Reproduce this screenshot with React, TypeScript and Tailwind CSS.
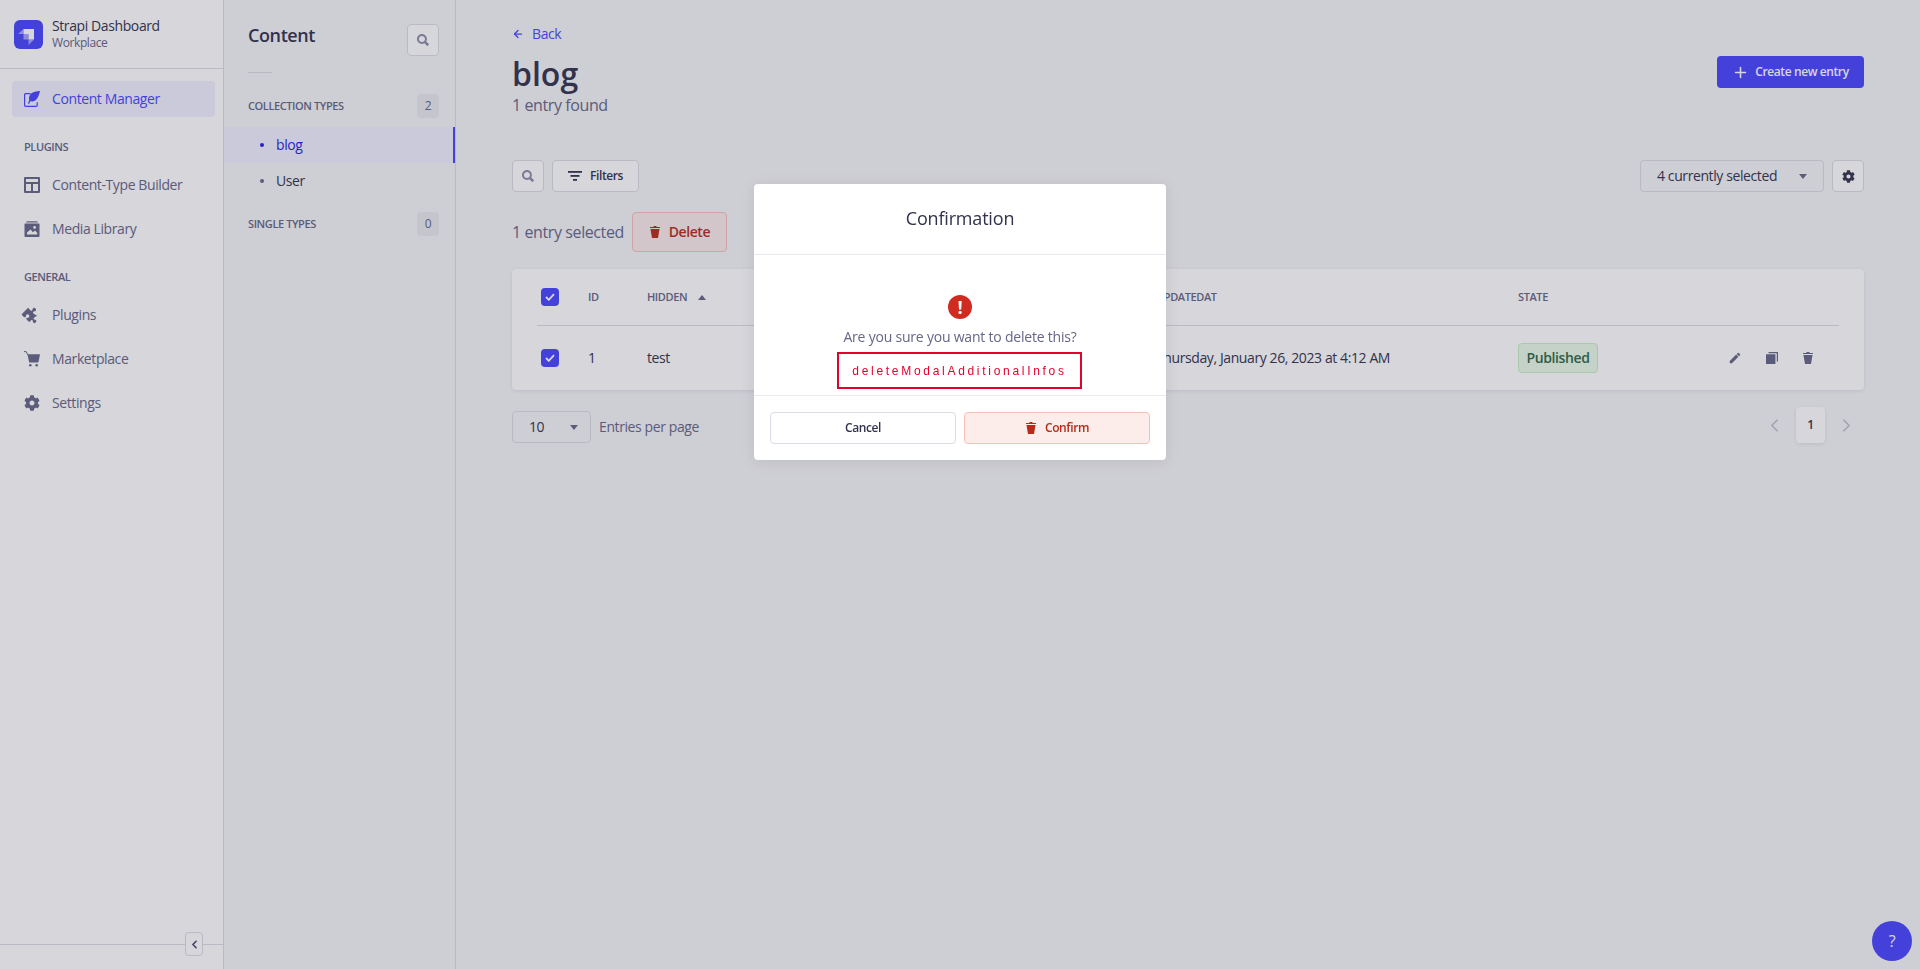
import React from 'react';
import { ArrowLeft, ChevronLeft, ChevronRight, Plus } from 'lucide-react';
import { FaCog, FaPuzzlePiece } from 'react-icons/fa';
import { MdEdit } from 'react-icons/md';

const font = { fontFamily: '"Open Sans", sans-serif' };

const TrashIcon = ({ className }: { className?: string }) => (
  <svg viewBox="0 0 24 24" className={className} fill="currentColor">
    <path d="M3.236 6.149a.2.2 0 00-.197.233L6 24h12l2.96-17.618a.2.2 0 00-.196-.233H3.236zM21.8 1.983c.11 0 .2.09.2.2v1.584a.2.2 0 01-.2.2H2.2a.2.2 0 01-.2-.2V2.183c0-.11.09-.2.2-.2h5.511c.9 0 1.631-1.09 1.631-1.983h5.316c0 .894.73 1.983 1.631 1.983H21.8z" />
  </svg>
);

const SearchIcon = ({ className }: { className?: string }) => (
  <svg viewBox="0 0 24 24" className={className} fill="currentColor">
    <path fillRule="evenodd" clipRule="evenodd" d="M23.813 20.163l-5.3-5.367a9.792 9.792 0 001.312-4.867C19.825 4.455 15.375 0 9.913 0 4.45 0 0 4.455 0 9.929c0 5.473 4.45 9.928 9.912 9.928a9.757 9.757 0 005.007-1.4l5.275 5.35a.634.634 0 00.913 0l2.706-2.737a.641.641 0 000-.907zM9.91 3.867c3.338 0 6.05 2.718 6.05 6.061s-2.712 6.061-6.05 6.061c-3.337 0-6.05-2.718-6.05-6.06 0-3.344 2.713-6.062 6.05-6.062z" />
  </svg>
);

const FilterIcon = () => (
  <svg viewBox="0 0 14 10" className="w-[14px] h-[10px]" fill="#32324d">
    <rect x="0" y="0" width="14" height="1.8" />
    <rect x="2.5" y="4" width="9" height="1.8" />
    <rect x="5" y="8" width="4" height="1.8" />
  </svg>
);

const Caret = ({ up }: { up?: boolean }) => (
  <svg viewBox="0 0 8 5" className="w-[8px] h-[5px]" fill="#666687">
    <path d={up ? 'M4 0l4 5H0z' : 'M0 0h8L4 5z'} />
  </svg>
);

const Logo = () => (
  <div className="w-[29px] h-[29px] rounded-md bg-[#4945ff] pl-1 pt-[9px]">
    <svg viewBox="0 0 16 16" className="w-[16px] h-[16px]" fill="#fff">
      <path d="M5.5 0H16v10.5H10.5V5H5.5z" />
      <path d="M5.5 0v5H0z" opacity="0.5" />
      <path d="M5.5 5h5v5.5H5.5z" opacity="0.5" />
      <path d="M10.5 10.5H16L10.5 16z" opacity="0.5" />
    </svg>
  </div>
);

const FeatherIcon = () => (
  <svg viewBox="0 0 16 16" className="w-[16px] h-[16px]" fill="none">
    <path d="M6.5 2.7H1.6a1 1 0 00-1 1v10.6a1 1 0 001 1h10.6a1 1 0 001-1v-3" stroke="#4945ff" strokeWidth="1.2" />
    <path d="M16 0c-3 .2-7.6.9-9.6 3.3C4.9 5.1 4.8 7.5 5.2 9.2L3.9 12.7h1.3l1.2-2.4c1.7.4 3.8.1 5.4-1.3C14.2 6.9 15.2 3.2 16 0z" fill="#4945ff" />
  </svg>
);

const LayoutIcon = () => (
  <svg viewBox="0 0 16 16" className="w-[16px] h-[16px]">
    <path fill="#666687" fillRule="evenodd" d="M1 0h14a1 1 0 011 1v14a1 1 0 01-1 1H1a1 1 0 01-1-1V1a1 1 0 011-1zm1 2v3h12V2H2zm0 5v7h5V7H2zm7 0v7h5V7H9z" />
  </svg>
);

const MediaIcon = () => (
  <svg viewBox="0 0 16 16" className="w-[16px] h-[16px]">
    <rect x="2.5" y="0.3" width="11" height="1.2" fill="#666687" />
    <path fill="#666687" fillRule="evenodd" d="M1.2 2.6h13.6a.7.7 0 01.7.7v11.9a.7.7 0 01-.7.7H1.2a.7.7 0 01-.7-.7V3.3a.7.7 0 01.7-.7zM10.6 5a1.4 1.4 0 100 2.8 1.4 1.4 0 000-2.8zM3 13.6h10.2v-1.9l-2.3-2.3-2 1.8-2.3-2.7L3 11.6z" />
  </svg>
);

const CartIcon = () => (
  <svg viewBox="0 0 16 16" className="w-[16px] h-[16px]" fill="#666687">
    <path d="M0 .6h2.2l1.5 3.2" fill="none" stroke="#666687" strokeWidth="1" />
    <path d="M3.4 3.2H16l-1.3 6.8-.6 1.4H5.2l-.3-1.4z" />
    <circle cx="6.3" cy="14.3" r="1.3" />
    <circle cx="12.7" cy="14.3" r="1.3" />
  </svg>
);

const DuplicateIcon = () => (
  <svg viewBox="0 0 14 14" className="w-[12px] h-[12px]" fill="#666687">
    <rect x="0" y="2.6" width="11" height="11.4" rx="0.6" />
    <path d="M3 0h11v11h-1.4V1.4H3z" />
  </svg>
);

const CheckBox = () => (
  <div className="w-[18px] h-[18px] rounded-[4px] bg-[#4945ff] flex items-center justify-center">
    <svg viewBox="0 0 10 8" className="w-[10px] h-[8px]" fill="none">
      <path d="M1 4l2.8 2.8L9 1.2" stroke="#fff" strokeWidth="1.8" />
    </svg>
  </div>
);

const NavItem = ({ icon, label, active }: { icon: React.ReactNode; label: string; active?: boolean }) => (
  <div className={`h-[36px] ml-3 mr-2 px-3 rounded flex items-center gap-3 text-sm ${active ? 'bg-[#f0f0ff] text-[#4945ff] font-medium' : 'text-[#666687]'}`}>
    <span className="w-4 h-4 flex items-center justify-center shrink-0">{icon}</span>
    {label}
  </div>
);

const NavLabel = ({ children }: { children: string }) => (
  <div className="mt-[22px] mb-3 px-6 h-4 flex items-center text-[11px] font-semibold uppercase text-[#666687]">{children}</div>
);

const SideNav = () => (
  <nav className="relative w-[224px] shrink-0 h-full bg-white border-r border-[#dcdce4] flex flex-col">
    <div className="h-[69px] shrink-0 border-b border-[#dcdce4] pl-[14px] flex items-center gap-[9px]">
      <Logo />
      <div className="flex flex-col">
        <span className="text-sm leading-[18px] font-medium text-[#32324d]">Strapi Dashboard</span>
        <span className="text-xs leading-[16px] text-[#666687]">Workplace</span>
      </div>
    </div>
    <div className="pt-3 flex flex-col">
      <NavItem active label="Content Manager" icon={<FeatherIcon />} />
      <NavLabel>Plugins</NavLabel>
      <div className="flex flex-col gap-2">
        <NavItem label="Content-Type Builder" icon={<LayoutIcon />} />
        <NavItem label="Media Library" icon={<MediaIcon />} />
      </div>
      <NavLabel>General</NavLabel>
      <div className="flex flex-col gap-2">
        <NavItem label="Plugins" icon={<FaPuzzlePiece size={16} color="#666687" className="rotate-45 shrink-0" />} />
        <NavItem label="Marketplace" icon={<CartIcon />} />
        <NavItem label="Settings" icon={<FaCog size={16} color="#666687" />} />
      </div>
    </div>
    <div className="relative mt-auto h-[25px] border-t border-[#dcdce4]">
      <button className="absolute -top-[13px] right-[20px] w-[18px] h-[24px] bg-white border border-[#dcdce4] rounded flex items-center justify-center">
        <ChevronLeft size={13} strokeWidth={3} color="#4a4a6a" />
      </button>
    </div>
  </nav>
);

const SectionLabel = ({ label, count, className }: { label: string; count: number; className: string }) => (
  <div className={`px-6 flex items-center justify-between ${className}`}>
    <span className="text-[11px] font-semibold uppercase text-[#666687]">{label}</span>
    <span className="w-[22px] h-[24px] rounded bg-[#eaeaef] flex items-center justify-center text-xs text-[#666687]">{count}</span>
  </div>
);

const SubNav = () => (
  <aside className="w-[232px] shrink-0 h-full bg-[#f6f6f8] border-r border-[#dcdce4] flex flex-col">
    <div className="pt-6 px-6 flex items-start justify-between">
      <h2 className="text-lg leading-[22px] font-semibold text-[#32324d]">Content</h2>
      <button className="w-8 h-8 -mr-[8px] bg-white border border-[#dcdce4] rounded flex items-center justify-center text-[#8e8ea9]">
        <SearchIcon className="w-3 h-3" />
      </button>
    </div>
    <div className="ml-6 mt-4 w-6 h-px bg-[#dcdce4]" />
    <SectionLabel label="Collection Types" count={2} className="mt-[21px] pr-4" />
    <div className="mt-[9px] flex flex-col">
      <div className="h-9 pl-[36px] flex items-center gap-3 bg-[#f0f0ff] border-r-2 border-[#4945ff] text-sm font-medium text-[#271fe0]">
        <span className="w-1 h-1 rounded-full bg-[#271fe0]" />
        blog
      </div>
      <div className="h-9 pl-[36px] flex items-center gap-3 text-sm text-[#32324d]">
        <span className="w-1 h-1 rounded-full bg-[#666687]" />
        User
      </div>
    </div>
    <SectionLabel label="Single Types" count={0} className="mt-[13px] pr-4" />
  </aside>
);

const Table = () => (
  <div className="mt-[17px] bg-white rounded shadow-[0_1px_4px_rgba(33,33,52,0.1)] px-[25px]">
    <div className="h-[57px] grid grid-cols-[51px_59px_509px_362px_1fr] items-center border-b border-[#dcdce4] text-[11px] font-semibold uppercase text-[#666687]">
      <div className="pl-1"><CheckBox /></div>
      <div>ID</div>
      <div className="flex items-center gap-[11px]">Hidden <Caret up /></div>
      <div>UpdatedAt</div>
      <div>State</div>
    </div>
    <div className="h-[64px] grid grid-cols-[51px_59px_509px_362px_1fr] items-center text-sm text-[#32324d]">
      <div className="pl-1"><CheckBox /></div>
      <div>1</div>
      <div>test</div>
      <div>Thursday, January 26, 2023 at 4:12 AM</div>
      <div className="flex items-center justify-between pr-[25px]">
        <span className="h-[30px] w-[80px] flex items-center justify-center rounded bg-[#eafbe7] border border-[#c6f0c2] text-sm font-semibold text-[#2f6846]">Published</span>
        <div className="flex items-center gap-6 text-[#666687]">
          <MdEdit size={14} />
          <DuplicateIcon />
          <TrashIcon className="w-3 h-3" />
        </div>
      </div>
    </div>
  </div>
);

const Main = () => (
  <main className="flex-1 min-w-0 h-full bg-[#f6f6f8] px-14 pt-6">
    <div className="h-5 flex items-center gap-2 text-sm text-[#4945ff]">
      <ArrowLeft size={12} strokeWidth={2.5} /> Back
    </div>
    <div className="flex items-start justify-between">
      <div>
        <h1 className="mt-[10px] h-[39px] flex items-center text-[32px] font-semibold tracking-normal text-[#32324d]">blog</h1>
        <p className="text-base leading-6 text-[#666687]">1 entry found</p>
      </div>
      <button className="mt-3 h-8 w-[147px] bg-[#4945ff] rounded flex items-center justify-center gap-[6px] text-xs font-semibold text-white">
        <Plus size={17} strokeWidth={2.2} /> Create new entry
      </button>
    </div>

    <div className="mt-[43px] flex items-center justify-between">
      <div className="flex items-center gap-2">
        <button className="w-8 h-8 bg-white border border-[#dcdce4] rounded flex items-center justify-center text-[#8e8ea9]">
          <SearchIcon className="w-3 h-3" />
        </button>
        <button className="h-8 w-[87px] bg-white border border-[#dcdce4] rounded flex items-center justify-center gap-2 text-xs font-semibold text-[#32324d]">
          <FilterIcon /> Filters
        </button>
      </div>
      <div className="flex items-center gap-2">
        <div className="h-8 w-[184px] bg-[#f6f6f8] border border-[#dcdce4] rounded pl-4 pr-4 flex items-center justify-between text-sm text-[#32324d]">
          4 currently selected <Caret />
        </div>
        <button className="w-8 h-8 bg-white border border-[#dcdce4] rounded flex items-center justify-center text-[#32324d]">
          <FaCog size={13} />
        </button>
      </div>
    </div>

    <div className="mt-5 h-10 flex items-center gap-2">
      <span className="text-base text-[#666687]">1 entry selected</span>
      <button className="h-10 w-[95px] bg-[#fcecea] border border-[#f5c0b8] rounded flex items-center justify-center gap-2 text-sm font-semibold text-[#b72b1a]">
        <TrashIcon className="w-3 h-3" /> Delete
      </button>
    </div>

    <Table />

    <div className="mt-[17px] flex items-start justify-between">
      <div className="pt-1 flex items-center gap-2">
        <div className="h-8 w-[79px] border border-[#dcdce4] bg-[#f6f6f8] rounded pl-4 pr-[12px] flex items-center justify-between text-sm text-[#32324d]">
          10 <Caret />
        </div>
        <span className="text-sm text-[#666687]">Entries per page</span>
      </div>
      <div className="pr-[7px] flex items-center gap-[11px] text-[#c0c0cf]">
        <ChevronLeft size={21} strokeWidth={2} />
        <span className="w-[29px] h-9 bg-white rounded shadow-[0_1px_4px_rgba(33,33,52,0.1)] flex items-center justify-center text-xs font-semibold text-[#32324d]">1</span>
        <ChevronRight size={21} strokeWidth={2} />
      </div>
    </div>
  </main>
);

const ConfirmModal = () => (
  <div className="fixed inset-0 z-10 bg-[rgba(50,50,77,0.2)] flex justify-center items-start pt-[184px]">
    <div className="w-[412px] h-[276px] bg-white rounded flex flex-col shadow-[0_2px_15px_rgba(33,33,52,0.1)]">
      <div className="h-[71px] shrink-0 pb-[2px] border-b border-[#eaeaef] flex items-center justify-center text-lg font-medium tracking-[-0.01em] text-[#32324d]">Confirmation</div>
      <div className="h-[141px] shrink-0 border-b border-[#eaeaef] flex flex-col items-center pt-[40px]">
        <div className="w-6 h-6 rounded-full bg-[#d02b20] flex items-center justify-center text-white text-[18px] leading-none font-bold">!</div>
        <div className="mt-2 h-5 flex items-center text-sm tracking-[-0.015em] text-[#666687]">Are you sure you want to delete this?</div>
        <div className="mt-[5px] -ml-px w-[245px] h-[37px] border-2 border-[#e4002b] flex items-center justify-center text-xs tracking-[2.7px] text-[#e4002b]" style={{ fontFamily: '"Liberation Sans", sans-serif' }}>deleteModalAdditionalInfos</div>
      </div>
      <div className="flex-1 px-4 pt-4 flex gap-2">
        <button className="h-8 flex-1 bg-white border border-[#dcdce4] rounded text-xs font-semibold text-[#32324d]">Cancel</button>
        <button className="h-8 flex-1 bg-[#fcecea] border border-[#f5c0b8] rounded flex items-center justify-center gap-2 text-xs font-semibold text-[#b72b1a]">
          <TrashIcon className="w-3 h-3" /> Confirm
        </button>
      </div>
    </div>
  </div>
);

const App: React.FC = () => {
  return (
    <div className="h-screen w-full flex overflow-hidden tracking-tight" style={font}>
      <SideNav />
      <SubNav />
      <Main />
      <button className="fixed right-2 bottom-2 w-10 h-10 rounded-full bg-[#4945ff] text-white text-base flex items-center justify-center">?</button>
      <ConfirmModal />
    </div>
  );
};

export default App;
